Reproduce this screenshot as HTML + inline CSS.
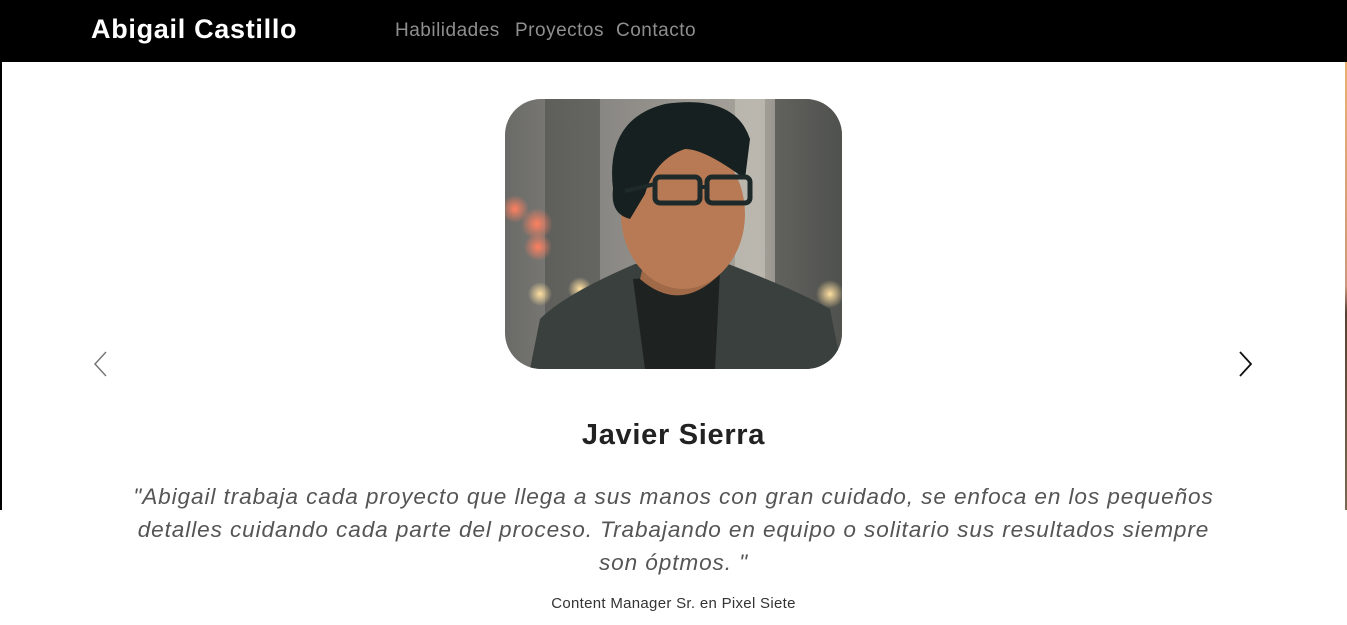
<!DOCTYPE html>
<html><head><meta charset="utf-8"><style>
*{margin:0;padding:0;box-sizing:border-box}
body{width:1347px;height:625px;overflow:hidden;background:#fff;font-family:"Liberation Sans",sans-serif;position:relative}
.nav{position:absolute;left:0;top:0;width:1347px;height:62px;background:#000}
.brand{position:absolute;left:91px;top:14px;color:#fff;font-weight:bold;font-size:27px;letter-spacing:0.7px}
.links{position:absolute;left:395px;top:20px;color:#8e8e8e;font-size:19px;letter-spacing:0.5px;white-space:nowrap}
.links span{position:absolute;top:0}
.leftstrip{position:absolute;left:0;top:62px;width:2px;height:448px;background:#000}
.rightstrip{position:absolute;left:1345px;top:62px;width:2px;height:448px;background:linear-gradient(#e8b070,#c89a80 50%,#5a4030 56%,#7a6a50)}
.photo{position:absolute;left:505px;top:99px;width:337px;height:270px;border-radius:36px;overflow:hidden}
.arrow{position:absolute;top:350px}
h2{position:absolute;left:0;width:1347px;top:419px;text-align:center;font-size:29px;color:#222;font-weight:bold;letter-spacing:0.7px}
.quote{position:absolute;left:0;width:1347px;top:480px;text-align:center;font-style:italic;font-size:22.6px;line-height:33px;color:#555;letter-spacing:0.9px}
.role{position:absolute;left:0;width:1347px;top:595px;text-align:center;font-size:15px;color:#333;letter-spacing:0.3px}
</style></head><body>
<div class="nav"><div class="brand">Abigail Castillo</div><div class="links"><span style="left:0">Habilidades</span><span style="left:120px">Proyectos</span><span style="left:221px">Contacto</span></div></div>
<div class="leftstrip"></div><div class="rightstrip"></div>
<div class="photo"><svg width="337" height="270" viewBox="0 0 337 270">
<defs><linearGradient id="bg" x1="0" x2="1"><stop offset="0" stop-color="#6a6a66"/><stop offset="0.3" stop-color="#8a8884"/><stop offset="0.75" stop-color="#a8a49c"/><stop offset="1" stop-color="#5e605c"/></linearGradient>
<radialGradient id="bk"><stop offset="0" stop-color="#ff8060"/><stop offset="1" stop-color="#ff806000"/></radialGradient>
<radialGradient id="bk2"><stop offset="0" stop-color="#ffe0a0"/><stop offset="1" stop-color="#ffe0a000"/></radialGradient></defs>
<rect width="337" height="270" fill="url(#bg)"/>
<rect x="40" y="0" width="55" height="270" fill="#4e504c" opacity=".6"/>
<rect x="270" y="0" width="67" height="270" fill="#4a4c48" opacity=".7"/>
<rect x="230" y="0" width="30" height="200" fill="#c8c4bc" opacity=".6"/>
<circle cx="10" cy="110" r="14" fill="url(#bk)"/><circle cx="32" cy="125" r="16" fill="url(#bk)"/><circle cx="33" cy="148" r="14" fill="url(#bk)"/>
<circle cx="35" cy="195" r="12" fill="url(#bk2)"/><circle cx="75" cy="190" r="12" fill="url(#bk2)"/><circle cx="325" cy="195" r="14" fill="url(#bk2)"/>
<path d="M25 270 L35 220 Q60 195 130 165 L210 160 Q290 190 325 210 L337 270Z" fill="#3a403e"/>
<path d="M128 180 L215 172 L210 270 L140 270Z" fill="#1e2220"/>
<path d="M140 160 Q175 200 200 165 L215 175 Q175 215 135 180Z" fill="#a06a48"/>
<ellipse cx="178" cy="115" rx="62" ry="75" fill="#b87a55"/>
<path d="M108 90 Q100 20 160 5 Q230 -5 245 40 L240 80 Q200 50 180 50 Q150 60 140 95 L125 120 Q105 115 108 90Z" fill="#162020"/>
<rect x="150" y="78" width="45" height="26" rx="5" fill="none" stroke="#1e2a2a" stroke-width="5"/>
<rect x="202" y="78" width="43" height="26" rx="5" fill="none" stroke="#1e2a2a" stroke-width="5"/>
<path d="M195 88 L202 88 M150 85 L120 92" stroke="#1e2a2a" stroke-width="4"/>
</svg></div>
<svg class="arrow" style="left:92px" width="16" height="28" viewBox="0 0 16 28"><path d="M14 2 L3 14 L14 26" fill="none" stroke="#777" stroke-width="1.5"/></svg>
<svg class="arrow" style="left:1238px" width="16" height="28" viewBox="0 0 16 28"><path d="M2 2 L13 14 L2 26" fill="none" stroke="#111" stroke-width="1.8"/></svg>
<h2>Javier Sierra</h2>
<div class="quote">"Abigail trabaja cada proyecto que llega a sus manos con gran cuidado, se enfoca en los pequeños<br>detalles cuidando cada parte del proceso. Trabajando en equipo o solitario sus resultados siempre<br>son óptmos. "</div>
<div class="role">Content Manager Sr. en Pixel Siete</div>
</body></html>
